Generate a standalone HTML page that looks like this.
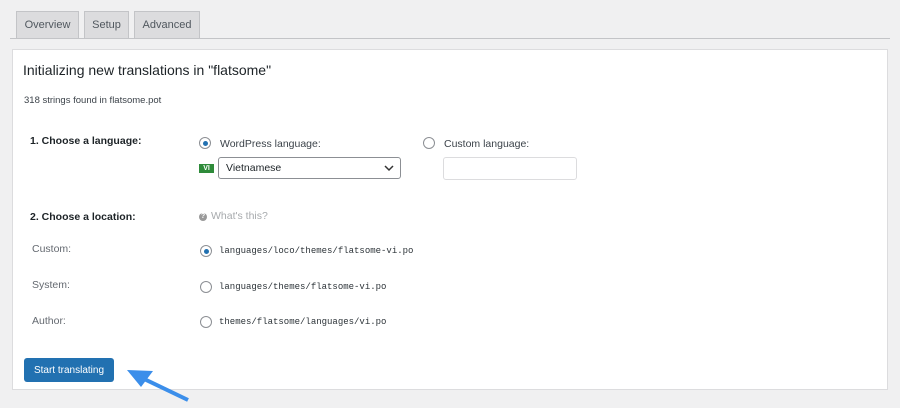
<!DOCTYPE html>
<html><head><style>
body{margin:0;width:900px;height:408px;background:#f0f0f1;font-family:"Liberation Sans",sans-serif;position:relative;overflow:hidden;color:#1d2327}
.a{position:absolute;white-space:nowrap}
.tab{position:absolute;top:11px;height:27px;background:#dcdcde;border:1px solid #c3c4c7;border-bottom:none;font-size:11px;color:#50575e;line-height:27px;text-align:center;box-sizing:border-box}
.panel{position:absolute;left:12px;top:49px;width:876px;height:341px;background:#fff;border:1px solid #dcdcde;box-sizing:border-box}
.r{position:absolute;width:10px;height:10px;border:1px solid #8c8f94;border-radius:50%;background:#fff}
.r.on::after{content:"";position:absolute;left:2.5px;top:2.5px;width:5px;height:5px;border-radius:50%;background:#2271b1}
.mono{font-family:"Liberation Mono",monospace;font-size:9px;color:#2c3338}
.lbl{font-size:10.5px;color:#646970}
</style></head><body>
<div class="tab" style="left:16px;width:63px">Overview</div>
<div class="tab" style="left:84px;width:45px">Setup</div>
<div class="tab" style="left:134px;width:66px">Advanced</div>
<div class="a" style="left:10px;top:38px;width:880px;height:1px;background:#c3c4c7"></div>
<div class="panel"></div>
<div class="a" style="left:23px;top:62px;font-size:14px;color:#1d2327">Initializing new translations in "flatsome"</div>
<div class="a" style="left:24px;top:95px;font-size:9.5px;color:#3c434a">318 strings found in flatsome.pot</div>
<div class="a" style="left:30px;top:135px;font-size:10.5px;font-weight:bold;color:#1d2327">1. Choose a language:</div>
<div class="r on" style="left:199px;top:137px"></div>
<div class="a lbl" style="left:220px;top:138px;color:#3c434a">WordPress language:</div>
<div class="r" style="left:423px;top:137px"></div>
<div class="a lbl" style="left:444px;top:138px;color:#3c434a">Custom language:</div>
<div class="a" style="left:199px;top:164px;width:15px;height:9px;background:#2e8b3a;color:#fff;font-size:7px;line-height:9px;text-align:center;font-weight:bold">VI</div>
<div class="a" style="left:218px;top:157px;width:183px;height:22px;border:1px solid #8c8f94;border-radius:3px;box-sizing:border-box;font-size:10.5px;line-height:20px;padding-left:7px">Vietnamese
<svg style="position:absolute;right:6px;top:7px" width="10" height="7"><path d="M1 1l4 4 4-4" fill="none" stroke="#333" stroke-width="1.5"/></svg></div>
<div class="a" style="left:443px;top:157px;width:134px;height:23px;border:1px solid #dcdcde;border-radius:3px;box-sizing:border-box"></div>
<div class="a" style="left:30px;top:211px;font-size:10.5px;font-weight:bold">2. Choose a location:</div>
<div class="a" style="left:199px;top:213px;width:8px;height:8px;border-radius:50%;background:#999;color:#fff;font-size:7px;line-height:8px;text-align:center;font-weight:bold">?</div>
<div class="a" style="left:211px;top:210px;font-size:10.5px;color:#a7aaad">What's this?</div>
<div class="a lbl" style="left:32px;top:243px">Custom:</div>
<div class="r on" style="left:200px;top:245px"></div>
<div class="a mono" style="left:219px;top:246px">languages/loco/themes/flatsome-vi.po</div>
<div class="a lbl" style="left:32px;top:279px">System:</div>
<div class="r" style="left:200px;top:281px"></div>
<div class="a mono" style="left:219px;top:282px">languages/themes/flatsome-vi.po</div>
<div class="a lbl" style="left:32px;top:315px">Author:</div>
<div class="r" style="left:200px;top:316px"></div>
<div class="a mono" style="left:219px;top:317px">themes/flatsome/languages/vi.po</div>
<div class="a" style="left:24px;top:358px;width:90px;height:24px;background:#2271b1;border-radius:3px;color:#fff;font-size:10px;line-height:26px;text-align:center">Start translating</div>
<svg class="a" style="left:0;top:0" width="900" height="408"><path d="M188 400L140 377" stroke="#3b8eea" stroke-width="4"/><path d="M127 370L153 371L141 387Z" fill="#3b8eea"/></svg>
</body></html>
